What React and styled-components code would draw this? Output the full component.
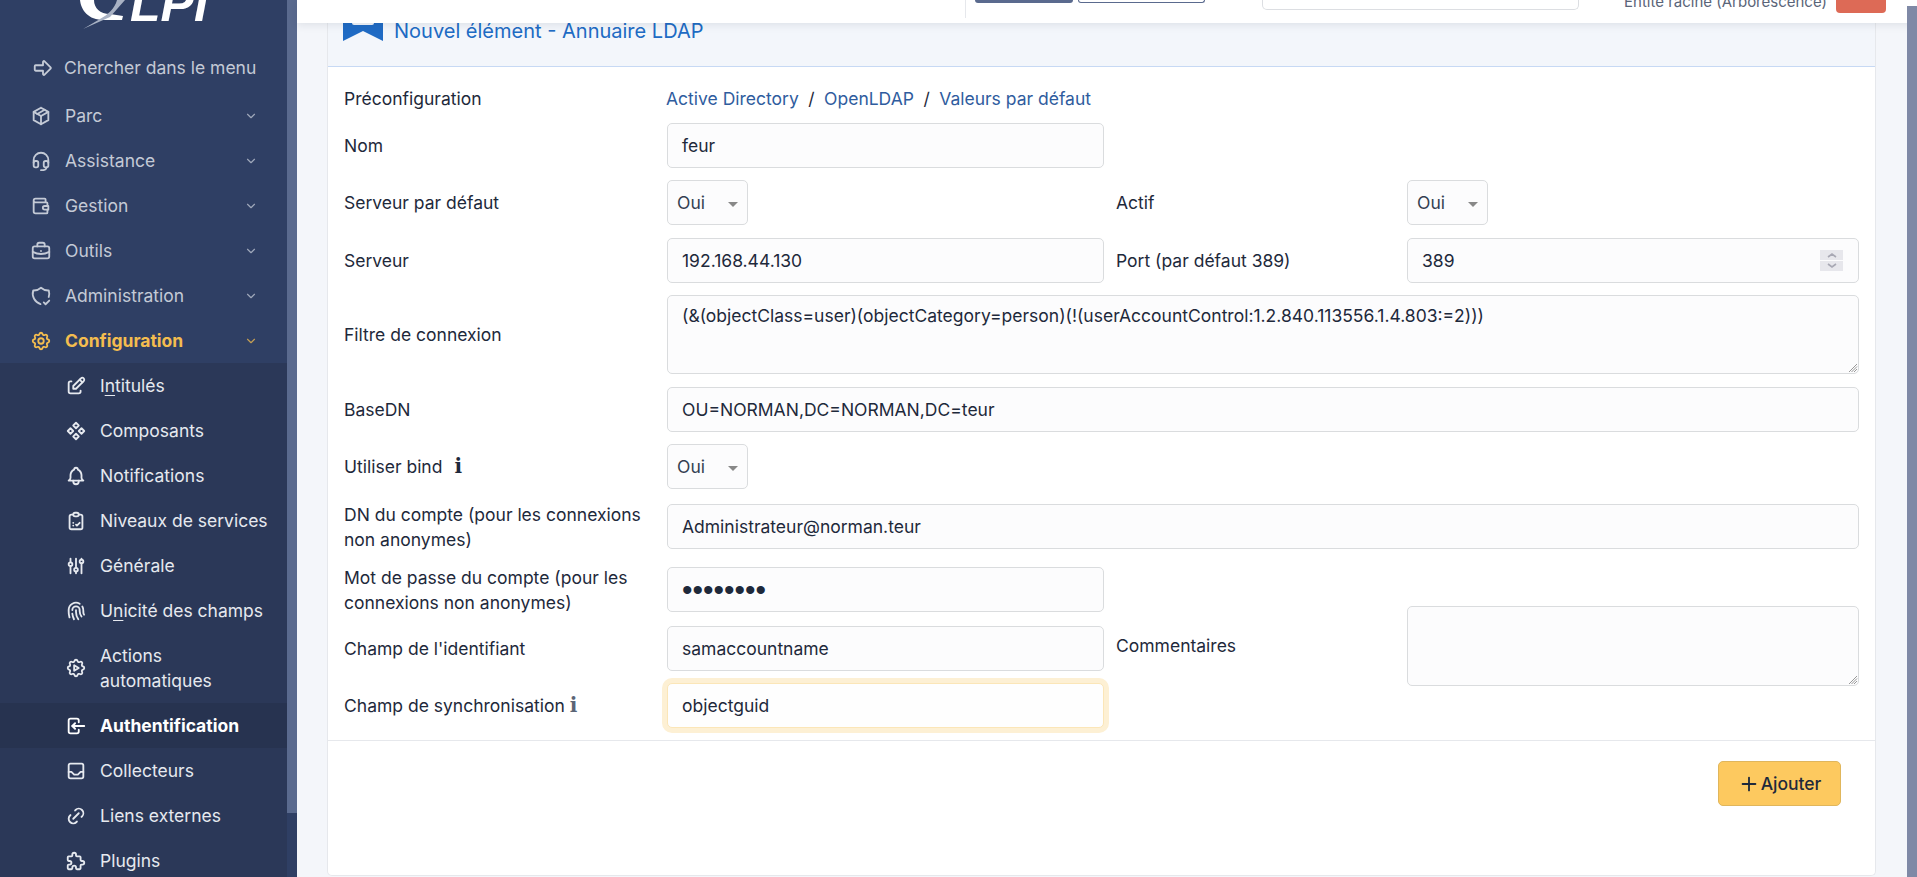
import React from 'react';
import styled, { createGlobalStyle } from 'styled-components';
import {
  TbArrowBigRight, TbPackage, TbHeadset, TbWallet, TbBriefcase, TbShieldCheck, TbSettings, TbChevronDown,
  TbEdit, TbComponents, TbBell, TbCheckupList, TbAdjustments, TbFingerprint, TbSettingsAutomation, TbLogin,
  TbInbox, TbLink, TbPuzzle, TbPlus,
} from 'react-icons/tb';

const GlobalStyle = createGlobalStyle`
  html, body { margin: 0; padding: 0; height: 100%; overflow: hidden; }
  body { font-family: Inter, "Liberation Sans", sans-serif; font-size: 17.5px; color: #1e293b; background: #f4f6fa; }
  #root { height: 100%; }
`;

const Page = styled.div`
  display: flex;
  height: 877px;
  overflow: hidden;
`;

const Side = styled.aside`
  width: 287px;
  flex: none;
  background: #2f3f64;
  color: #d5d9e2;
  overflow: hidden;
`;

const SideBar = styled.div`
  width: 10px;
  flex: none;
  background: #2f3f64;
  display: flex;
  flex-direction: column;
  span { display: block; height: 813px; background: #5a6a8e; }
`;

const Logo = styled.div`
  height: 29px;
  padding-left: 88px;
  display: flex;
  align-items: flex-end;
  position: relative;
  font: italic 700 50px/29px "Liberation Sans", sans-serif;
  color: #fff;
  svg { position: absolute; left: 70px; top: 0; }
`;

const LogoText = styled.span`
  height: 21px;
  line-height: 0;
  padding-left: 42px;
  transform: translateY(-4px);
`;

const SearchRow = styled.div`
  display: flex;
  align-items: center;
  height: 45px;
  margin-top: 16px;
  padding-left: 32px;
  gap: 10px;
  color: #c4cad6;
  svg { width: 22px; height: 22px; flex: none; }
`;

const MenuRow = styled.div`
  display: flex;
  align-items: center;
  height: 45px;
  padding-left: 30px;
  padding-right: 29px;
  color: ${({ $active }) => ($active ? '#f4bd4f' : '#c4cad6')};
  font-weight: ${({ $active }) => ($active ? 700 : 400)};
  margin-top: ${({ $first }) => ($first ? '3px' : '0')};
`;

const MenuIcon = styled.span`
  width: 35px;
  flex: none;
  display: flex;
  svg { width: 22px; height: 22px; }
`;

const MenuLabel = styled.span`
  flex: 1;
`;

const Caret = styled(TbChevronDown)`
  width: 14px;
  height: 14px;
  opacity: .75;
`;

const SubMenu = styled.div`
  background: #2b3858;
`;

const SubRow = styled.div`
  display: flex;
  align-items: center;
  padding: ${({ $tall }) => ($tall ? '10px 15px 10px 65px' : '0 15px 0 65px')};
  min-height: 45px;
  box-sizing: border-box;
  color: ${({ $active }) => ($active ? '#fff' : '#e6e9ef')};
  background: ${({ $active }) => ($active ? '#273350' : 'transparent')};
  font-weight: ${({ $active }) => ($active ? 700 : 400)};
  line-height: 25px;
`;

const SubIcon = styled.span`
  width: 35px;
  flex: none;
  display: flex;
  svg { width: 22px; height: 22px; }
`;

const Under = styled.span`
  text-decoration: underline;
  text-underline-offset: 3px;
  text-decoration-thickness: 1px;
`;

const Main = styled.main`
  flex: 1;
  min-width: 0;
  display: flex;
  flex-direction: column;
  position: relative;
`;

const Header = styled.header`
  height: 23px;
  background: #fff;
  box-shadow: 0 2px 8px rgba(30, 41, 59, .1);
  position: relative;
  z-index: 2;
  display: flex;
  align-items: flex-start;
  padding-left: 668px;
  flex: none;
  overflow: hidden;
`;

const HeadSep = styled.div`
  width: 1px;
  height: 18px;
  background: #e6e8ec;
  margin-right: 9px;
`;

const HeadBtn = styled.div`
  width: 98px;
  height: 3px;
  background: #5a6a8e;
  border-radius: 0 0 3px 3px;
`;

const HeadBtnOutline = styled.div`
  width: 125px;
  height: 2px;
  margin-left: 5px;
  border: 1px solid #5a6a8e;
  border-top: 0;
  border-radius: 0 0 3px 3px;
`;

const HeadSearch = styled.div`
  width: 315px;
  height: 9px;
  margin-left: 57px;
  border: 1px solid #dcdee2;
  border-top: 0;
  border-radius: 0 0 5px 5px;
`;

const HeadEntity = styled.div`
  margin-left: 45px;
  width: 212px;
  height: 6px;
  font-size: 15px;
  line-height: 15px;
  color: #5a6478;
  white-space: nowrap;
  position: relative;
  span { position: absolute; left: 0; bottom: -3px; }
`;

const HeadUser = styled.div`
  width: 50px;
  height: 13px;
  background: #dd6a56;
  border-radius: 0 0 4px 4px;
`;

const ScrollBar = styled.div`
  position: absolute;
  right: 0;
  top: 6px;
  bottom: 0;
  width: 10px;
  background: #7f89a6;
  z-index: 3;
`;

const Card = styled.section`
  margin: 0 41px 1px 30px;
  flex: 1;
  min-height: 0;
  background: #fff;
  border: 1px solid #e6e8ec;
  border-top: 0;
  border-radius: 0 0 5px 5px;
  display: flex;
  flex-direction: column;
`;

const CardHead = styled.div`
  height: 43px;
  box-sizing: content-box;
  background: #f3f6fb;
  border-bottom: 1px solid #c7d9f4;
  display: flex;
  align-items: flex-start;
  color: #206bc4;
  font-size: 20px;
  flex: none;
  svg { margin: 0 11px 0 15px; flex: none; }
`;

const CardTitle = styled.span`
  line-height: 16px;
`;

const Form = styled.div`
  padding: 13px 16px 12px 16px;
  flex: none;
`;

const Row = styled.div`
  display: grid;
  grid-template-columns: 323px 437px 303px 1fr;
  grid-template-rows: minmax(0, 1fr);
  align-items: center;
  height: ${({ $h }) => $h}px;
  margin-bottom: ${({ $mb }) => $mb ?? 0}px;
`;

const Label = styled.div`
  line-height: 25px;
  color: #1e293b;
  display: flex;
  align-items: center;
  gap: ${({ $gap }) => $gap ?? 0}px;
  padding-right: 16px;
  padding-left: ${({ $side }) => ($side ? '12px' : '0')};
`;

const Links = styled.div`
  color: #2f5c9e;
  white-space: nowrap;
  grid-column: 2 / -1;
  margin-left: -1px;
  span { color: #1e293b; margin: 0 9.5px; }
`;

const field = `
  box-sizing: border-box;
  border: 1px solid #dadcde;
  border-radius: 5px;
  background: #fcfcfd;
  color: #1e293b;
`;

const Field = styled.div`
  ${field}
  height: 45px;
  display: flex;
  align-items: center;
  padding: 0 14px;
  grid-column: ${({ $wide }) => ($wide ? '2 / -1' : 'auto')};
  position: relative;
  ${({ $focus }) => $focus && `
    border-color: #fbe6b8;
    box-shadow: 0 0 0 5px #fdf0d4;
    background: #fefefe;
  `}
`;

const Dots = styled.span`
  font: 30px/1 "Liberation Sans", sans-serif;
`;

const Area = styled.div`
  ${field}
  height: ${({ $h }) => $h}px;
  padding: 7px 14px;
  line-height: 25px;
  grid-column: ${({ $wide }) => ($wide ? '2 / -1' : 'auto')};
  flex: ${({ $fill }) => ($fill ? 1 : 'none')};
  position: relative;
  white-space: nowrap;
`;

const Grip = styled.svg`
  position: absolute;
  right: 0;
  bottom: 0;
`;

const Select = styled.div`
  ${field}
  width: 81px;
  height: 45px;
  display: flex;
  align-items: center;
  padding-left: 9px;
  position: relative;
  color: #333f52;
  &::after {
    content: '';
    position: absolute;
    right: 9px;
    top: 21px;
    border: 5px solid transparent;
    border-top: 5px solid #888;
    border-bottom: 0;
  }
`;

const Spinner = styled.div`
  position: absolute;
  right: 15px;
  top: 11px;
  width: 23px;
  display: flex;
  flex-direction: column;
  gap: 1px;
  span { height: 10px; background: #e7e7ec; display: flex; align-items: center; justify-content: center; }
`;

const SplitRows = styled.div`
  display: grid;
  grid-template-columns: 760px 1fr;
`;

const SplitLeft = styled.div`
  display: flex;
  flex-direction: column;
`;

const SplitAside = styled.div`
  display: flex;
  align-items: center;
  margin-top: 39px;
  align-self: start;
`;

const AsideLabel = styled(Label)`
  width: 303px;
  flex: none;
  box-sizing: border-box;
  padding-right: 0;
  position: relative;
  top: -1px;
`;

const Footer = styled.div`
  border-top: 1px solid #e6e8ec;
  display: flex;
  justify-content: flex-end;
  padding: 20px 34px 0 0;
`;

const Button = styled.button`
  font: 500 17.5px Inter, sans-serif;
  height: 45px;
  width: 123px;
  border: 1px solid #e0b65c;
  background: #fdc95f;
  border-radius: 5px;
  color: #1e293b;
  display: flex;
  align-items: center;
  justify-content: center;
  gap: 1px;
  padding: 0;
  svg { width: 22px; height: 22px; }
`;

const InfoMark = styled.span`
  font: 700 20px "DejaVu Serif", "Liberation Serif", serif;
  color: ${({ $dim }) => ($dim ? '#5b6576' : '#1e293b')};
  line-height: 25px;
`;

const menu = [
  ['Parc', TbPackage],
  ['Assistance', TbHeadset],
  ['Gestion', TbWallet],
  ['Outils', TbBriefcase],
  ['Administration', TbShieldCheck],
];

const sub = [
  [<>I<Under>n</Under>titulés</>, TbEdit],
  ['Composants', TbComponents],
  ['Notifications', TbBell],
  ['Niveaux de services', TbCheckupList],
  ['Générale', TbAdjustments],
  [<>U<Under>n</Under>icité des champs</>, TbFingerprint],
  ['Actions automatiques', TbSettingsAutomation, { $tall: true }],
  ['Authentification', TbLogin, { $active: true }],
  ['Collecteurs', TbInbox],
  ['Liens externes', TbLink],
  ['Plugins', TbPuzzle],
];

const ResizeGrip = () => (
  <Grip width="10" height="10" viewBox="0 0 10 10">
    <path d="M9 1 1 9M9 3.5 3.5 9M9 6 6 9" stroke="#999" strokeWidth="1" fill="none" />
  </Grip>
);

export default function App() {
  return (
    <Page>
      <GlobalStyle />
      <Side>
        <Logo>
          <svg width="70" height="32" viewBox="0 0 70 32">
            <path d="M10 0C11 10 18 20 34 20H52L53 16 40 14C30 14 24 8 24 0z" fill="#fff" />
            <path d="M13 29 40 17 55 0H47C45 8 38 15 30 19z" fill="#a9b2c4" />
          </svg>
          <LogoText>LPI</LogoText>
        </Logo>
        <SearchRow><TbArrowBigRight />Chercher dans le menu</SearchRow>
        {menu.map(([label, Icon], i) => (
          <MenuRow key={label} $first={i === 0}>
            <MenuIcon><Icon /></MenuIcon>
            <MenuLabel>{label}</MenuLabel>
            <Caret />
          </MenuRow>
        ))}
        <MenuRow $active>
          <MenuIcon><TbSettings /></MenuIcon>
          <MenuLabel>Configuration</MenuLabel>
          <Caret />
        </MenuRow>
        <SubMenu>
          {sub.map(([label, Icon, props], i) => (
            <SubRow key={i} {...props}>
              <SubIcon><Icon /></SubIcon>
              <span>{label}</span>
            </SubRow>
          ))}
        </SubMenu>
      </Side>
      <SideBar><span /></SideBar>
      <Main>
        <ScrollBar />
        <Header>
          <HeadSep />
          <HeadBtn />
          <HeadBtnOutline />
          <HeadSearch />
          <HeadEntity><span>Entité racine (Arborescence)</span></HeadEntity>
          <HeadUser />
        </Header>
        <Card>
          <CardHead>
            <svg width="40" height="18" viewBox="0 0 40 18">
              <path d="M0 0H40V18L20 8 0 18z" fill="#206bc4" />
              <rect x="9" y="-2" width="22" height="4" rx="2" fill="#f3f6fb" />
            </svg>
            <CardTitle>Nouvel élément - Annuaire LDAP</CardTitle>
          </CardHead>
          <Form>
            <Row $h={36} $mb={7}>
              <Label>Préconfiguration</Label>
              <Links>Active Directory<span>/</span>OpenLDAP<span>/</span>Valeurs par défaut</Links>
            </Row>
            <Row $h={45} $mb={12}>
              <Label>Nom</Label>
              <Field>feur</Field>
            </Row>
            <Row $h={45} $mb={13}>
              <Label>Serveur par défaut</Label>
              <Select>Oui</Select>
              <Label $side>Actif</Label>
              <Select>Oui</Select>
            </Row>
            <Row $h={45} $mb={12}>
              <Label>Serveur</Label>
              <Field>192.168.44.130</Field>
              <Label $side>Port (par défaut 389)</Label>
              <Field>
                389
                <Spinner>
                  <span><svg width="12" height="6" viewBox="0 0 12 6"><path d="M2 5l4-3 4 3" stroke="#a8a8b4" strokeWidth="1.6" fill="none" /></svg></span>
                  <span><svg width="12" height="6" viewBox="0 0 12 6"><path d="M2 1l4 3 4-3" stroke="#a8a8b4" strokeWidth="1.6" fill="none" /></svg></span>
                </Spinner>
              </Field>
            </Row>
            <Row $h={79} $mb={13}>
              <Label>Filtre de connexion</Label>
              <Area $wide $h={79}>
                (&amp;(objectClass=user)(objectCategory=person)(!(userAccountControl:1.2.840.113556.1.4.803:=2)))
                <ResizeGrip />
              </Area>
            </Row>
            <Row $h={45} $mb={12}>
              <Label>BaseDN</Label>
              <Field $wide>OU=NORMAN,DC=NORMAN,DC=teur</Field>
            </Row>
            <Row $h={45} $mb={15}>
              <Label $gap={12}>Utiliser bind <InfoMark>i</InfoMark></Label>
              <Select>Oui</Select>
            </Row>
            <Row $h={45} $mb={18}>
              <Label>DN du compte (pour les connexions non anonymes)</Label>
              <Field $wide>Administrateur@norman.teur</Field>
            </Row>
            <SplitRows>
              <SplitLeft>
                <Row $h={45} $mb={14}>
                  <Label>Mot de passe du compte (pour les connexions non anonymes)</Label>
                  <Field><Dots>••••••••</Dots></Field>
                </Row>
                <Row $h={45} $mb={12}>
                  <Label>Champ de l'identifiant</Label>
                  <Field>samaccountname</Field>
                </Row>
                <Row $h={45}>
                  <Label $gap={5}>Champ de synchronisation <InfoMark $dim>i</InfoMark></Label>
                  <Field $focus>objectguid</Field>
                </Row>
              </SplitLeft>
              <SplitAside>
                <AsideLabel $side>Commentaires</AsideLabel>
                <Area $fill $h={80}><ResizeGrip /></Area>
              </SplitAside>
            </SplitRows>
          </Form>
          <Footer>
            <Button><TbPlus />Ajouter</Button>
          </Footer>
        </Card>
      </Main>
    </Page>
  );
}
